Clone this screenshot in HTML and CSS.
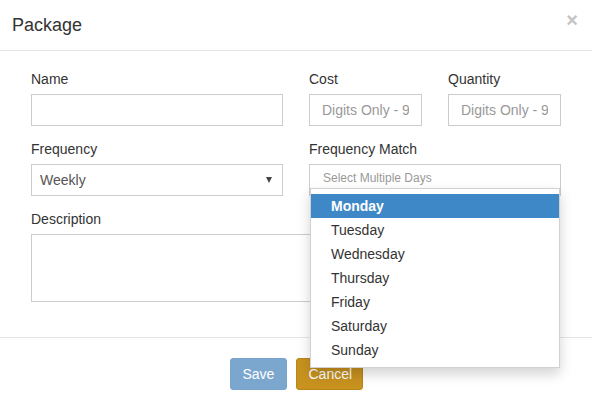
FILE: index.html
```html
<!DOCTYPE html>
<html>
<head>
<meta charset="utf-8">
<link rel="stylesheet" href="styles.css">
</head>
<body>
<div class="modal">
  <div class="modal-header">
    <h4 class="modal-title">Package</h4>
    <span class="close">×</span>
  </div>
  <div class="modal-body">
    <div class="grid">
      <div class="group">
        <label>Name</label>
        <input class="control" type="text">
      </div>
      <div class="group">
        <label>Cost</label>
        <input class="control" type="text" placeholder="Digits Only - 99999">
      </div>
      <div class="group">
        <label>Quantity</label>
        <input class="control" type="text" placeholder="Digits Only - 99999">
      </div>
      <div class="group">
        <label>Frequency</label>
        <div class="control select"><span>Weekly</span><span class="arrow"></span></div>
      </div>
      <div class="group span2">
        <label>Frequency Match</label>
        <div class="multi">
          <div class="control multi-input">Select Multiple Days</div>
          <ul class="dropdown">
            <li class="active">Monday</li>
            <li>Tuesday</li>
            <li>Wednesday</li>
            <li>Thursday</li>
            <li>Friday</li>
            <li>Saturday</li>
            <li>Sunday</li>
          </ul>
        </div>
      </div>
      <div class="group span3">
        <label>Description</label>
        <textarea class="control area"></textarea>
      </div>
    </div>
  </div>
  <div class="modal-footer">
    <button class="btn btn-save">Save</button>
    <button class="btn btn-cancel">Cancel</button>
  </div>
</div>
</body>
</html>
```
FILE: styles.css
```css
* { box-sizing: border-box; }
html, body { margin: 0; padding: 0; background: #fff; }
body {
  font-family: "Liberation Sans", Arial, sans-serif;
  font-size: 14px;
  color: #333;
}
.modal { width: 592px; }
.modal-header {
  height: 51px;
  border-bottom: 1px solid #e5e5e5;
  display: flex;
  align-items: center;
  padding: 0 14px 0 12px;
}
.modal-title {
  margin: 0;
  font-size: 18px;
  font-weight: normal;
  color: #333;
  line-height: 20px;
}
.close {
  margin-left: auto;
  align-self: flex-start;
  margin-top: 8px;
  font-size: 20px;
  font-weight: bold;
  color: #c4c4c4;
  line-height: 24px;
}
.modal-body { padding: 18px 31px 35px 31px; }
.grid {
  display: grid;
  grid-template-columns: 252px 113px 113px;
  column-gap: 26px;
  row-gap: 13px;
}
.span2 { grid-column: 2 / 4; }
.span3 { grid-column: 1 / 4; }
.group label {
  display: block;
  line-height: 20px;
  margin-bottom: 5px;
  color: #333;
}
.control {
  display: block;
  width: 100%;
  height: 32px;
  border: 1px solid #ccc;
  background: #fff;
  padding: 0 12px;
  font-family: inherit;
  font-size: 14px;
  color: #555;
  outline: none;
  border-radius: 0;
}
.control::placeholder { color: #999; }
.select {
  display: flex;
  align-items: center;
  padding: 0 10px 0 8px;
  color: #555;
}
.arrow {
  margin-left: auto;
  width: 0; height: 0;
  border-left: 3.5px solid transparent;
  border-right: 3.5px solid transparent;
  border-top: 6px solid #444;
}
.multi { position: relative; }
.multi-input {
  font-size: 12px;
  color: #999;
  line-height: 26px;
  padding: 0 13px;
}
.dropdown {
  position: absolute;
  top: 24px;
  left: 1px;
  width: 250px;
  margin: 0;
  padding: 5px 0;
  list-style: none;
  background: #fff;
  border: 1px solid rgba(0,0,0,.18);
  box-shadow: 0 6px 12px rgba(0,0,0,.175);
  z-index: 10;
}
.dropdown li {
  height: 24px;
  line-height: 24px;
  padding-left: 20px;
  color: #333;
  font-size: 14px;
}
.dropdown li.active {
  background: #3e88c8;
  color: #fff;
  font-weight: bold;
}
.area { height: 68px; width: 529px; resize: none; }
.modal-footer {
  border-top: 1px solid #e5e5e5;
  padding-top: 20px;
  display: flex;
  justify-content: center;
  gap: 9px;
}
.btn {
  font-family: inherit;
  font-size: 14px;
  height: 32px;
  padding: 0 12px;
  color: #fff;
  border-radius: 3px;
  border: 1px solid transparent;
}
.btn-save { background: #7ba7cf; border-color: #78a3ca; width: 57px; }
.btn-cancel { background: #c8921f; border-color: #b98519; width: 67px; }
```
